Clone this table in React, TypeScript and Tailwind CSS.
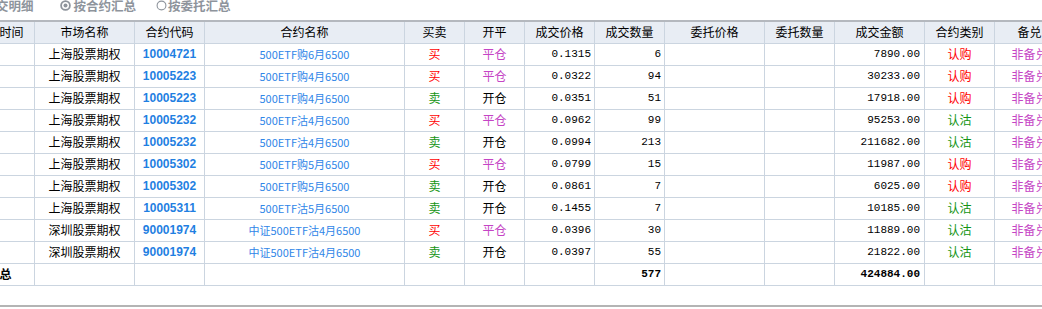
import React from "react";

type Row = {
  market: string;
  code: string;
  name: string;
  side: "买" | "卖";
  oc: "平仓" | "开仓";
  price: string;
  qty: string;
  amount: string;
  kind: "认购" | "认沽";
};

const rows: Row[] = [
  { market: "上海股票期权", code: "10004721", name: "500ETF购6月6500", side: "买", oc: "平仓", price: "0.1315", qty: "6", amount: "7890.00", kind: "认购" },
  { market: "上海股票期权", code: "10005223", name: "500ETF购4月6500", side: "买", oc: "平仓", price: "0.0322", qty: "94", amount: "30233.00", kind: "认购" },
  { market: "上海股票期权", code: "10005223", name: "500ETF购4月6500", side: "卖", oc: "开仓", price: "0.0351", qty: "51", amount: "17918.00", kind: "认购" },
  { market: "上海股票期权", code: "10005232", name: "500ETF沽4月6500", side: "买", oc: "平仓", price: "0.0962", qty: "99", amount: "95253.00", kind: "认沽" },
  { market: "上海股票期权", code: "10005232", name: "500ETF沽4月6500", side: "卖", oc: "开仓", price: "0.0994", qty: "213", amount: "211682.00", kind: "认沽" },
  { market: "上海股票期权", code: "10005302", name: "500ETF购5月6500", side: "买", oc: "平仓", price: "0.0799", qty: "15", amount: "11987.00", kind: "认购" },
  { market: "上海股票期权", code: "10005302", name: "500ETF购5月6500", side: "卖", oc: "开仓", price: "0.0861", qty: "7", amount: "6025.00", kind: "认购" },
  { market: "上海股票期权", code: "10005311", name: "500ETF沽5月6500", side: "卖", oc: "开仓", price: "0.1455", qty: "7", amount: "10185.00", kind: "认沽" },
  { market: "深圳股票期权", code: "90001974", name: "中证500ETF沽4月6500", side: "买", oc: "平仓", price: "0.0396", qty: "30", amount: "11889.00", kind: "认沽" },
  { market: "深圳股票期权", code: "90001974", name: "中证500ETF沽4月6500", side: "卖", oc: "开仓", price: "0.0397", qty: "55", amount: "21822.00", kind: "认沽" },
];

const headers = ["成交时间", "市场名称", "合约代码", "合约名称", "买卖", "开平", "成交价格", "成交数量", "委托价格", "委托数量", "成交金额", "合约类别", "备兑"];
const widths = [70, 100, 70, 200, 60, 60, 70, 70, 100, 70, 90, 70, 70];

const td = "border border-[#cbd5e0] h-[22px] p-0 whitespace-nowrap overflow-hidden";
const num = "text-right pr-[3px] font-['Liberation_Mono','Noto_Sans_CJK_SC',monospace] text-[11px]";

function Radio({ checked }: { checked: boolean }) {
  return (
    <svg width="11" height="11" viewBox="0 0 11 11" className="shrink-0">
      <circle cx="5.5" cy="5.5" r="4.4" fill="white" stroke="#8e949c" strokeWidth={checked ? 1.8 : 1.1} />
      {checked && <circle cx="5.5" cy="5.5" r="2" fill="#8e949c" />}
    </svg>
  );
}

export default function App() {
  return (
    <div className="w-[1042px] h-[309px] overflow-hidden bg-white font-['Noto_Sans_CJK_SC',sans-serif] text-black">
      <div className="h-[20px] flex items-start text-[12.5px] font-bold text-[#8e949c] leading-[13px] -mt-[1px]">
        <span className="-ml-[4px]">交明细</span>
        <div className="flex items-center gap-[3px] ml-[26px]">
          <Radio checked />
          <span>按合约汇总</span>
        </div>
        <div className="flex items-center gap-[1px] ml-[20px]">
          <Radio checked={false} />
          <span>按委托汇总</span>
        </div>
      </div>
      <div className="mt-[1px] overflow-hidden">
        <table className="table-fixed border-collapse -ml-[36px] w-[1100px] text-[12px] leading-[14px]">
          <colgroup>
            {widths.map((w, i) => (
              <col key={i} style={{ width: w }} />
            ))}
          </colgroup>
          <thead>
            <tr>
              {headers.map((h) => (
                <th
                  key={h}
                  className="border border-[#cbd5e0] border-t-[2px] border-t-[#b4b8be] h-[22px] p-0 bg-[#e8edf4] font-normal text-center whitespace-nowrap"
                >
                  {h}
                </th>
              ))}
            </tr>
          </thead>
          <tbody>
            {rows.map((r, i) => (
              <tr key={i}>
                <td className={td}></td>
                <td className={`${td} text-center`}>{r.market}</td>
                <td className={`${td} text-center font-['Liberation_Sans',sans-serif] font-bold text-[#1f7fe2]`}>{r.code}</td>
                <td className={`${td} text-center text-[11px] text-[#2f86e8]`}>{r.name}</td>
                <td className={`${td} text-center ${r.side === "买" ? "text-[#ff0000]" : "text-[#139413]"}`}>{r.side}</td>
                <td className={`${td} text-center ${r.oc === "平仓" ? "text-[#c545c5]" : "text-black"}`}>{r.oc}</td>
                <td className={`${td} ${num}`}>{r.price}</td>
                <td className={`${td} ${num}`}>{r.qty}</td>
                <td className={td}></td>
                <td className={td}></td>
                <td className={`${td} ${num} pr-[4px]`}>{r.amount}</td>
                <td className={`${td} text-center ${r.kind === "认购" ? "text-[#ff0000]" : "text-[#139413]"}`}>{r.kind}</td>
                <td className={`${td} text-center text-[#c545c5]`}>非备兑</td>
              </tr>
            ))}
            <tr>
              <td className={`${td} text-center font-bold`}>汇总</td>
              <td className={td}></td>
              <td className={td}></td>
              <td className={td}></td>
              <td className={td}></td>
              <td className={td}></td>
              <td className={td}></td>
              <td className={`${td} ${num} font-bold`}>577</td>
              <td className={td}></td>
              <td className={td}></td>
              <td className={`${td} ${num} pr-[4px] font-bold`}>424884.00</td>
              <td className={td}></td>
              <td className={td}></td>
            </tr>
          </tbody>
        </table>
      </div>
      <div className="mt-[19px] border-t-[2px] border-[#b4b4b4]" />
    </div>
  );
}
